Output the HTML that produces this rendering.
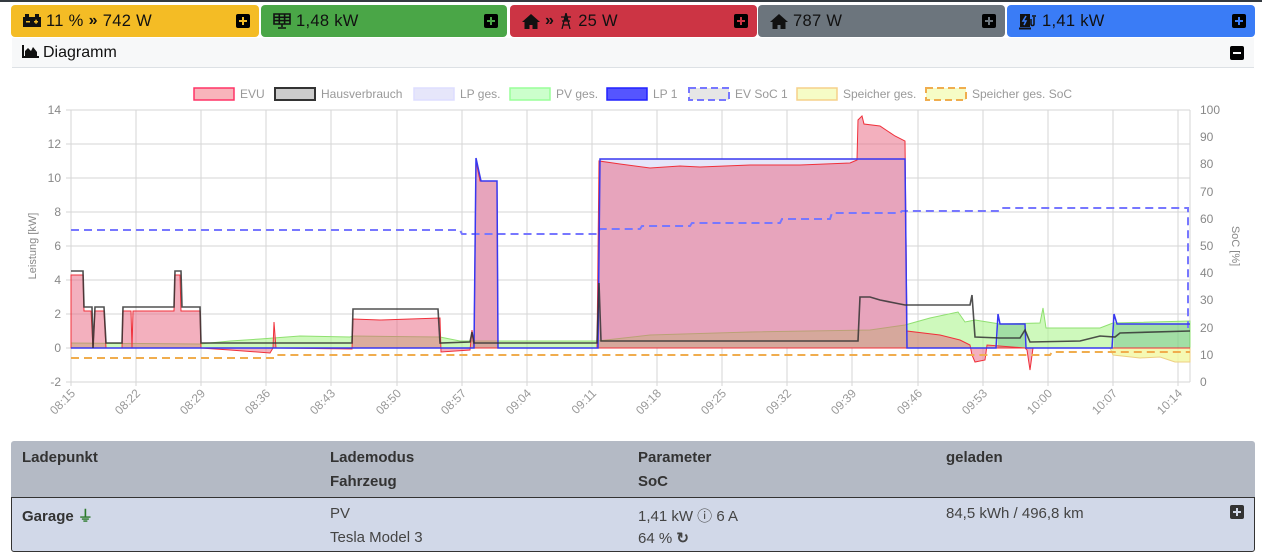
<!DOCTYPE html>
<html><head><meta charset="utf-8"><style>
*{margin:0;padding:0;box-sizing:border-box}
body{width:1262px;height:560px;background:#fff;font-family:"Liberation Sans",sans-serif;position:relative;overflow:hidden}
.topline{position:absolute;left:0;top:0;width:1262px;height:2px;background:#343a40}
.tab{position:absolute;top:5px;height:32px;border-radius:4px;font-size:16.5px;color:#111;line-height:32px;padding-left:12px;display:flex;align-items:center;gap:5px;letter-spacing:0.3px}
.pl{position:absolute;right:9px;top:9px;width:14px;height:14px;background:#000;border-radius:2px}
.pl:before{content:"";position:absolute;left:3px;top:6px;width:8px;height:2px;background:var(--c)}
.pl:after{content:"";position:absolute;left:6px;top:3px;width:2px;height:8px;background:var(--c)}
.hdr{position:absolute;left:12px;top:38px;width:1242px;height:30px;background:#f7f8f9;border-bottom:1px solid #dde1e5;font-size:16px;line-height:30px;padding-left:10px;color:#111}
.card{position:absolute;left:12px;top:68px;width:1242px;height:372px;background:#fff}
.tbl{position:absolute;left:11px;width:1244px;font-size:15px;color:#333}
.th{top:441px;height:56px;background:#b4bac5;border-radius:3px 3px 0 0;font-weight:bold;color:#333}
.tr{top:497px;height:55px;background:#d1d8e8;border:1px solid #333;border-radius:0 0 3px 3px;color:#444}
.c{position:absolute}
</style></head><body>
<div class="topline"></div>
<div class="tab" style="left:11px;width:248px;background:#f4bc25"><svg width="18" height="14" viewBox="0 0 18 14"><rect x="0" y="3" width="18" height="10" fill="#111"/><rect x="2" y="0" width="4" height="3" fill="#111"/><rect x="12" y="0" width="4" height="3" fill="#111"/><rect x="3" y="7" width="4" height="1.5" fill="#f4bc25"/><rect x="11" y="7" width="4" height="1.5" fill="#f4bc25"/><rect x="12.3" y="5.7" width="1.5" height="4" fill="#f4bc25"/></svg>11 % <b style="font-size:16px">»</b> 742 W<span class="pl" style="--c:#f4bc25"></span></div>
<div class="tab" style="left:261px;width:246px;background:#4aa647"><svg width="18" height="16" viewBox="0 0 18 16"><path d="M1 1h16v10H1z M1 4.3h16 M1 7.6h16 M6.3 1v10 M11.6 1v10 M9 11v3 M5 15h8" stroke="#111" stroke-width="1.6" fill="none"/></svg>1,48 kW<span class="pl" style="--c:#4aa647"></span></div>
<div class="tab" style="left:510px;width:247px;background:#cc3444"><svg width="18" height="15" viewBox="0 0 18 15"><path d="M9 0L0 8h2.5v7h5v-4h3v4h5V8H18z" fill="#111"/></svg><b style="font-size:16px">»</b><svg width="14" height="16" viewBox="0 0 14 16"><path d="M7 0L3 16M7 0l4 16M2 4h10M3 8h8M5 4l4 4M9 4L5 8M4 12h6" stroke="#111" stroke-width="1.3" fill="none"/></svg> 25 W<span class="pl" style="--c:#cc3444"></span></div>
<div class="tab" style="left:758px;width:247px;background:#6c757d"><svg width="18" height="15" viewBox="0 0 18 15"><path d="M9 0L0 8h2.5v7h5v-4h3v4h5V8H18z" fill="#111"/></svg>787 W<span class="pl" style="--c:#6c757d"></span></div>
<div class="tab" style="left:1007px;width:248px;background:#3a7cf6"><svg width="18" height="17" viewBox="0 0 18 17"><rect x="1" y="1" width="10" height="13" fill="#111"/><rect x="0" y="14.5" width="12" height="2" fill="#111"/><path d="M7 3L4 8h3l-2 4" stroke="#3a7cf6" stroke-width="1.5" fill="none"/><path d="M12 6v5c0 2 3 2 3 0V4M14 2v2M16 2v2" stroke="#111" stroke-width="1.5" fill="none"/></svg>1,41 kW<span class="pl" style="--c:#3a7cf6"></span></div>
<div class="hdr"><svg width="17" height="13" viewBox="0 0 17 13" style="vertical-align:-1px;margin-right:4px"><path d="M1 0v12h16" stroke="#111" stroke-width="2" fill="none"/><path d="M3 11V6l3-3 3 3 2-4 4 5v4z" fill="#111"/></svg>Diagramm<span style="position:absolute;right:10px;top:8px;width:14px;height:14px;background:#000;border-radius:2px"><span style="position:absolute;left:3px;top:6px;width:8px;height:2px;background:#f7f8f9"></span></span></div>
<div class="card"></div>
<svg style="position:absolute;left:0;top:70px" width="1262" height="370" viewBox="0 70 1262 370" font-family="Liberation Sans, sans-serif">
<g font-size="12" fill="#999">
<rect x="194" y="88" width="40" height="12" fill="#f8b4bb" stroke="#f36" stroke-width="1.5"/><text x="240" y="98">EVU</text>
<rect x="275" y="88" width="40" height="12" fill="#ccc" stroke="#333" stroke-width="2"/><text x="321" y="98">Hausverbrauch</text>
<rect x="414" y="88" width="40" height="12" fill="#e6e6fa" stroke="#ddf" stroke-width="1.5"/><text x="460" y="98">LP ges.</text>
<rect x="510" y="88" width="40" height="12" fill="#cfc" stroke="#9f9" stroke-width="1.5"/><text x="556" y="98">PV ges.</text>
<rect x="607" y="88" width="40" height="12" fill="#55f" stroke="#22f" stroke-width="1.5"/><text x="653" y="98">LP 1</text>
<rect x="689" y="88" width="40" height="12" fill="#e6e6e6" stroke="#77f" stroke-width="2" stroke-dasharray="7,4"/><text x="735" y="98">EV SoC 1</text>
<rect x="797" y="88" width="40" height="12" fill="#f6fcc6" stroke="#f5d08a" stroke-width="1.5"/><text x="843" y="98">Speicher ges.</text>
<rect x="926" y="88" width="40" height="12" fill="#f6fcc6" stroke="#f0ad4e" stroke-width="2" stroke-dasharray="7,4"/><text x="972" y="98">Speicher ges. SoC</text>
</g>
<g stroke="#d6d6d6" stroke-width="1">
<path d="M66 110H1190M66 144H1190M66 178H1190M66 212H1190M66 246H1190M66 280H1190M66 314H1190M66 348H1190M66 382H1190"/>
<path d="M71 110V386M136 110V386M201 110V386M266 110V386M331 110V386M397 110V386M462 110V386M527 110V386M592 110V386M657 110V386M722 110V386M787 110V386M852 110V386M918 110V386M983 110V386M1048 110V386M1113 110V386M1178 110V386M1190 110V382"/>
</g>
<g font-size="12" fill="#888" text-anchor="end">
<text x="61" y="114">14</text><text x="61" y="148">12</text><text x="61" y="182">10</text><text x="61" y="216">8</text><text x="61" y="250">6</text><text x="61" y="284">4</text><text x="61" y="318">2</text><text x="61" y="352">0</text><text x="61" y="386">-2</text>
</g>
<g font-size="12" fill="#888">
<text x="1200" y="114">100</text><text x="1200" y="141">90</text><text x="1200" y="168">80</text><text x="1200" y="196">70</text><text x="1200" y="223">60</text><text x="1200" y="250">50</text><text x="1200" y="277">40</text><text x="1200" y="304">30</text><text x="1200" y="332">20</text><text x="1200" y="359">10</text><text x="1200" y="386">0</text>
</g>
<text transform="translate(36,246) rotate(-90)" font-size="11" fill="#888" text-anchor="middle">Leistung [kW]</text>
<text transform="translate(1232,246) rotate(90)" font-size="11" fill="#888" text-anchor="middle">SoC [%]</text>
<g font-size="12" fill="#999" text-anchor="end">
<text transform="translate(76,394) rotate(-45)">08:15</text><text transform="translate(141,394) rotate(-45)">08:22</text><text transform="translate(206,394) rotate(-45)">08:29</text><text transform="translate(271,394) rotate(-45)">08:36</text><text transform="translate(336,394) rotate(-45)">08:43</text><text transform="translate(402,394) rotate(-45)">08:50</text><text transform="translate(467,394) rotate(-45)">08:57</text><text transform="translate(532,394) rotate(-45)">09:04</text><text transform="translate(597,394) rotate(-45)">09:11</text><text transform="translate(662,394) rotate(-45)">09:18</text><text transform="translate(727,394) rotate(-45)">09:25</text><text transform="translate(792,394) rotate(-45)">09:32</text><text transform="translate(857,394) rotate(-45)">09:39</text><text transform="translate(923,394) rotate(-45)">09:46</text><text transform="translate(988,394) rotate(-45)">09:53</text><text transform="translate(1053,394) rotate(-45)">10:00</text><text transform="translate(1118,394) rotate(-45)">10:07</text><text transform="translate(1183,394) rotate(-45)">10:14</text>
</g>
<path d="M474,348 L476,158 L481,181 L497,181 L498,348Z M598,348 L600,159 L905,159 L907,348Z" fill="#e6e6fa"/>
<path d="M71,343 L200,344 L230,341 L260,339 L300,336 L350,337 L353,336 L440,337 L460,341 L597,341 L650,335 L750,332 L870,330 L905,325 L930,318 L958,312 L965,322 L975,320 L1000,324 L1040,323 L1043,308 L1046,328 L1100,328 L1113,323 L1190,321 L1190,348 L71,348Z" fill="#aef58f" fill-opacity="0.6" stroke="#8fe070" stroke-width="1"/>
<path d="M1110,348 L1113,355 L1140,358 L1160,357 L1175,362 L1190,362 L1190,348Z" fill="#f3f7a0" fill-opacity="0.8" stroke="#eecf80" stroke-width="1"/>
<path d="M998,324 L1025,324 L1025,348 L998,348Z M1114,324 L1190,324 L1190,348 L1114,348Z" fill="#3aa070" fill-opacity="0.3"/>
<path d="M71,275 L83,275 L84,311 L91,311 L93,348 L95,311 L104,311 L106,348 L122,348 L123,311 L131,311 L132,348 L133,311 L174,311 L175,275 L180,275 L181,311 L200,311 L201,348 L230,350 L270,353 L273,348 L274,322 L276,348 L352,349 L353,319 L380,320 L440,318 L441,352 L470,350 L472,330 L474,348 L476,161 L480,181 L497,181 L498,348 L597,348 L599,161 L620,164 L650,168 L680,166 L700,167 L750,165 L800,165 L850,163 L857,160 L858,120 L862,116 L864,124 L880,126 L895,136 L905,141 L907,331 L940,335 L960,340 L970,345 L972,355 L975,362 L985,360 L987,345 L1025,348 L1027,350 L1030,370 L1033,348 L1190,348 L1190,348 L71,348Z" fill="#e8627e" fill-opacity="0.5" stroke="#f0303a" stroke-width="1"/>
<path d="M71,230 L460,230 L462,234 L597,234 L600,229 L640,229 L642,226 L690,226 L692,223 L780,223 L782,219 L830,219 L832,213 L900,213 L902,211 L1000,211 L1002,208 L1188,208 L1188,328" fill="none" stroke="#7777ff" stroke-width="2" stroke-dasharray="8,5"/>
<path d="M71,358 L274,358 L276,355 L1050,355 L1052,352 L1190,352" fill="none" stroke="#f0ad4e" stroke-width="2" stroke-dasharray="8,5"/>
<path d="M71,348 L474,348 L476,158 L481,181 L497,181 L498,348 L598,348 L600,159 L905,159 L907,348 L996,348 L998,314 L1000,324 L1025,324 L1026,348 L1112,348 L1114,314 L1117,324 L1190,324" fill="none" stroke="#3838f0" stroke-width="1.5"/>
<path d="M71,271 L83,271 L84,307 L92,307 L93,348 L95,307 L104,307 L106,343 L122,343 L123,307 L174,307 L175,271 L181,271 L182,307 L200,307 L201,343 L352,343 L353,309 L438,309 L440,343 L470,342 L472,332 L474,343 L597,343 L599,283 L601,341 L858,341 L860,297 L870,297 L880,300 L905,305 L970,305 L972,295 L975,337 L1000,338 L1020,338 L1025,330 L1030,342 L1080,341 L1100,336 L1115,337 L1120,333 L1190,331" fill="none" stroke="#333" stroke-width="1.6" stroke-opacity="0.85"/>
</svg>
<div class="tbl th"><span class="c" style="left:11px;top:8px">Ladepunkt</span><span class="c" style="left:319px;top:8px">Lademodus</span><span class="c" style="left:319px;top:32px">Fahrzeug</span><span class="c" style="left:627px;top:8px">Parameter</span><span class="c" style="left:627px;top:32px">SoC</span><span class="c" style="left:935px;top:8px">geladen</span></div>
<div class="tbl tr"><span class="c" style="left:10px;top:7px;font-weight:bold;color:#333">Garage <span style="color:#2a7a2a">⏚</span></span><span class="c" style="left:318px;top:7px">PV</span><span class="c" style="left:318px;top:31px">Tesla Model 3</span><span class="c" style="left:626px;top:7px">1,41 kW ⓘ 6 A</span><span class="c" style="left:626px;top:31px">64 % <b>↻</b></span><span class="c" style="left:934px;top:7px">84,5 kWh / 496,8 km</span><span class="c" style="left:1218px;top:7px;width:14px;height:14px;background:#333;border-radius:2px"><span style="position:absolute;left:3px;top:6px;width:8px;height:2px;background:#d1d8e8"></span><span style="position:absolute;left:6px;top:3px;width:2px;height:8px;background:#d1d8e8"></span></span></div>
</body></html>
